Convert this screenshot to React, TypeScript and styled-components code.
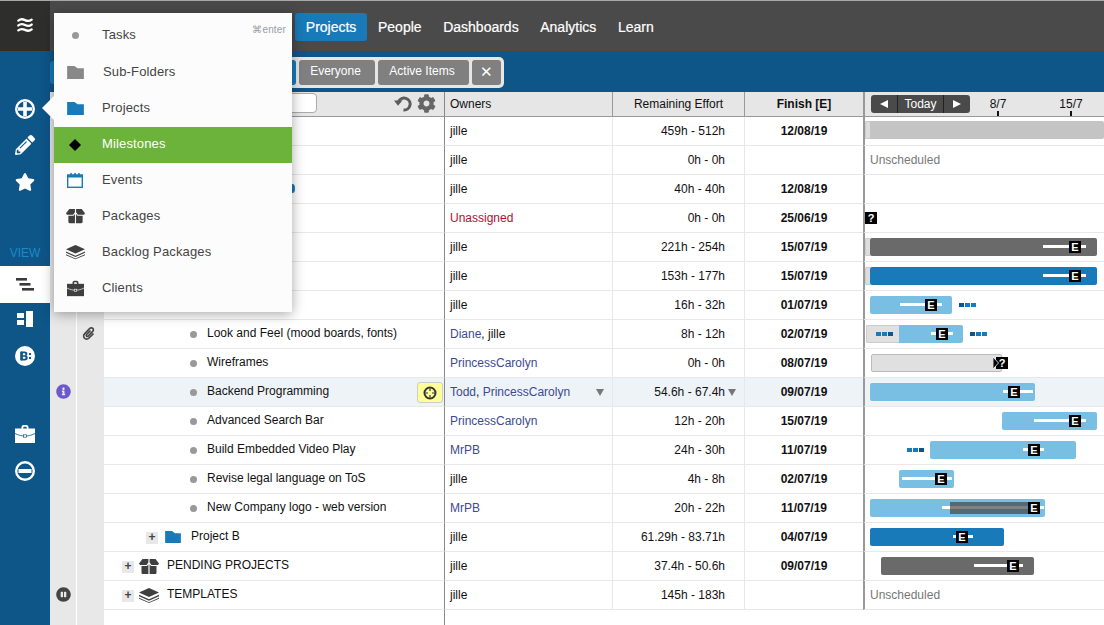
import React from 'react';
import styled, { createGlobalStyle, css } from 'styled-components';
import { FaPencilAlt, FaStar, FaInfoCircle, FaPauseCircle, FaCog, FaPaperclip } from 'react-icons/fa';

const Global = createGlobalStyle`
  html, body { margin: 0; padding: 0; height: 100%; overflow: hidden; background: #fff; }
  body { font-family: "Liberation Sans", Arial, sans-serif; font-size: 12px; color: #111; }
  #root { height: 100%; }
  * { box-sizing: border-box; }
`;

const BLUE = '#0e5588';
const MID = '#187ab8';
const LIGHT = '#79bfe3';

const Page = styled.div`
  position: relative; width: 1104px; height: 625px; overflow: hidden;
  display: flex; flex-direction: column;
`;
const TopBar = styled.header`
  height: 51px; flex: none; display: flex; background: #4a4a4a; border-top: 1px solid #a8a8a8;
`;
const Logo = styled.div`
  width: 50px; background: #2e2e2c; display: flex; align-items: center; justify-content: center; color: #fff; padding-bottom: 2px;
`;
const Nav = styled.nav`
  display: flex; align-items: flex-start; padding: 12px 0 0 245px;
`;
const NavItem = styled.a<{ $on?: boolean }>`
  height: 28px; line-height: 29px; padding: 0 10.8px; font-size: 14px; color: #fff; border-radius: 3px;
  -webkit-text-stroke: 0.2px #fff;
  ${p => p.$on && css`background: ${MID};`}
`;
const Body = styled.div`
  flex: 1; display: flex; min-height: 0;
`;
const Sidebar = styled.aside`
  width: 50px; flex: none; background: ${BLUE}; display: flex; flex-direction: column; padding-top: 39px; color: #fff;
`;
const SideIcon = styled.div<{ $mt?: number; $on?: boolean; $up?: number }>`
  height: 37px; flex: none; display: flex; align-items: center; justify-content: center;
  margin-top: ${p => p.$mt ?? 0}px; padding-bottom: ${p => p.$up ?? 0}px;
  ${p => p.$on && css`background: #fff; color: #3a3a3a;`}
`;
const ViewLabel = styled.div`
  margin-top: 45px; margin-bottom: 6px; height: 14px; line-height: 14px; text-align: center; color: #1a8ac8; font-size: 12px;
`;
const Main = styled.main`
  flex: 1; min-width: 0; display: flex; flex-direction: column;
`;
const SubBar = styled.div`
  height: 41px; flex: none; background: ${BLUE}; display: flex; align-items: center; padding: 1px 0 0 4px;
`;
const FilterGroup = styled.div`
  position: relative; display: flex; gap: 3px; padding: 3px; height: 31px; border-radius: 5px; background: #e6e6e6;
  &::before { content: ''; position: absolute; left: -4px; top: 4px; bottom: 4px; width: 8px; background: ${MID}; border-radius: 3px 0 0 3px; }
`;
const Filter = styled.div<{ $blue?: boolean; $w: number }>`
  width: ${p => p.$w}px; height: 25px; line-height: 23px; padding-right: 3px; text-align: center; color: #fff; border-radius: 3px; font-size: 12px;
  background: ${p => (p.$blue ? MID : '#808080')};
`;
const CloseFilter = styled(Filter)`
  font-size: 15px; padding-right: 0; line-height: 24px;
`;
const gridCols = css`
  display: grid; grid-template-columns: 26px 1px 27px 341px 168px 132px 118px 241px;
`;
const HeadRow = styled.div`
  ${gridCols}; height: 25px; flex: none; background: #e6e6e6; border-bottom: 1px solid #999;
`;
const HeadCell = styled.div<{ $bold?: boolean; $pad?: number }>`
  display: flex; align-items: center; justify-content: ${p => (p.$pad ? 'flex-start' : 'center')};
  padding-left: ${p => p.$pad ?? 0}px; padding-bottom: 1px; border-right: 1px solid #999; color: #111;
  font-weight: ${p => (p.$bold ? 700 : 400)};
`;
const FinishHead = styled(HeadCell)`border-right: none;`;
const HeadName = styled.div`
  display: flex; align-items: center; padding: 0 8px 2px 26px; border-right: 1px solid #888; color: #666;
`;
const SearchBox = styled.div`
  width: 187px; height: 20px; background: #fff; border: 1px solid #aaa; border-radius: 4px;
`;
const HeadTools = styled.div`
  margin-left: auto; display: flex; align-items: center; gap: 5px; color: #666;
`;
const GutterA = styled.div`background: #e8e8e8;`;
const GutterLine = styled.div`background: #fff;`;
const GutterB = styled.div`background: #e8e8e8; display: flex; align-items: center; justify-content: center; color: #444; padding: 0 4px 2px 0;`;
const GutterIcon = styled(GutterA)<{ $c?: string }>`
  display: flex; align-items: center; justify-content: center; color: ${p => p.$c ?? '#444'}; padding-bottom: 3px;
`;
const TimelineHead = styled.div`
  position: relative; border-left: 2px solid #999; margin-bottom: -1px; border-bottom: 1px solid #999;
`;
const TodayGroup = styled.div`
  position: absolute; left: 6px; top: 3px; height: 18px; width: 99px; display: flex; background: #4a4a4a; border-radius: 3px; color: #fff;
`;
const TodayPart = styled.div<{ $w: number; $b?: boolean }>`
  width: ${p => p.$w}px; display: flex; align-items: center; justify-content: center; font-size: 12px; font-weight: 400;
  ${p => p.$b && css`border-left: 1px solid #222; border-right: 1px solid #222;`}
`;
const Tri = styled.span<{ $left?: boolean }>`
  width: 0; height: 0; border-top: 4.5px solid transparent; border-bottom: 4.5px solid transparent;
  ${p => (p.$left ? css`border-right: 8px solid #fff;` : css`border-left: 8px solid #fff;`)}
`;
const DateLabel = styled.div<{ $x: number }>`
  position: absolute; left: ${p => p.$x - 20}px; top: 5px; width: 40px; text-align: center; color: #111;
  &::after { content: ''; position: absolute; left: 19px; top: 14px; width: 2px; height: 5px; background: #111; }
`;
const Rows = styled.div`
  flex: 1; display: flex; flex-direction: column; min-height: 0;
`;
const Row = styled.div<{ $hl?: boolean }>`
  ${gridCols}; height: 29px; flex: none;
  --row: ${p => (p.$hl ? '#eef3f8' : '#fff')};
`;
const Filler = styled.div`
  ${gridCols}; flex: 1;
`;
const cellBase = css`
  background: var(--row, #fff); border-bottom: 1px solid #e8e8e8;
`;
const NameCell = styled.div<{ $ind: number }>`
  ${cellBase}; position: relative; display: flex; align-items: center; padding: 0 0 3px ${p => p.$ind}px; border-right: 1px solid #888; white-space: nowrap; color: #111;
`;
const FillName = styled.div`border-right: 1px solid #888;`;
const Bullet = styled.span`
  width: 7px; height: 7px; border-radius: 50%; background: #999; margin-right: 10px; margin-top: 3px; flex: none;
`;
const Expander = styled.span`
  width: 12px; height: 12px; background: #e8e8e8; color: #444; font-size: 12px; font-weight: 700; line-height: 11px; text-align: center; flex: none; margin-top: 4px;
`;
const NodeIcon = styled.span<{ $ml: number; $mr: number }>`
  display: inline-flex; flex: none; margin: 3px ${p => p.$mr}px 0 ${p => p.$ml}px;
`;
const PeekDot = styled.span`
  position: absolute; left: 186px; top: 9px; width: 5px; height: 9px; border-radius: 50%; background: ${MID};
`;
const YellowBtn = styled.div`
  position: absolute; right: 1px; top: 4px; width: 26px; height: 21px; background: #ffff99; border: 1px solid #ccc; border-radius: 3px; display: flex; align-items: center; justify-content: center;
`;
const OwnerCell = styled.div`
  ${cellBase}; position: relative; display: flex; align-items: center; padding: 0 0 1px 5px; border-right: 1px solid #e8e8e8; color: #111; white-space: nowrap;
`;
const Who = styled.span<{ $c?: string }>`color: ${p => p.$c ?? '#111'};`;
const DropTri = styled.span<{ $x: number }>`
  position: absolute; left: ${p => p.$x}px; top: 11px; width: 0; height: 0;
  border-left: 4.5px solid transparent; border-right: 4.5px solid transparent; border-top: 7px solid #777;
`;
const EffortCell = styled.div`
  ${cellBase}; position: relative; display: flex; align-items: center; justify-content: flex-end; padding: 0 19px 1px 0; border-right: 1px solid #e8e8e8; color: #111;
`;
const FinishCell = styled.div`
  ${cellBase}; display: flex; align-items: center; justify-content: center; padding-bottom: 1px; font-weight: 700; color: #111;
`;
const GanttCell = styled.div`
  ${cellBase}; position: relative; border-left: 2px solid #999; overflow: hidden;
`;
const FillGantt = styled.div``;
const Unscheduled = styled.div`
  position: absolute; left: 5px; top: 7px; color: #777;
`;
const Bar = styled.div<{ $x: number; $w: number; $c: string; $y?: number }>`
  position: absolute; left: ${p => p.$x}px; width: ${p => p.$w}px; top: ${p => p.$y ?? 5}px; height: 18px; background: ${p => p.$c}; border-radius: 2px;
`;
const GhostBar = styled.div<{ $x: number; $w: number }>`
  position: absolute; left: ${p => p.$x}px; width: ${p => p.$w}px; top: 5px; height: 18px; background: #e0e0e0; border: 1px solid #bbb; border-radius: 2px;
`;
const Handle = styled.div<{ $y?: number }>`
  position: absolute; left: 0; width: 5px; top: ${p => p.$y ?? 5}px; height: 18px; background: #ddd; border: 1px solid #ccc; border-right: none; border-radius: 2px 0 0 2px;
`;
const GrayStub = styled.div<{ $x: number; $w: number }>`
  position: absolute; left: ${p => p.$x}px; width: ${p => p.$w}px; top: 5px; height: 18px; background: #e0e0e0; border: 1px solid #ccc; border-right: none; border-radius: 2px 0 0 2px;
`;
const Line = styled.div<{ $x: number; $w: number }>`
  position: absolute; left: ${p => p.$x}px; width: ${p => p.$w}px; top: 12px; height: 3px; background: #fff;
`;
const Shade = styled.div<{ $x: number; $w: number }>`
  position: absolute; left: ${p => p.$x}px; width: ${p => p.$w}px; top: 8px; height: 12px; background: rgba(60, 60, 60, 0.65);
`;
const Marker = styled.div<{ $x: number }>`
  position: absolute; left: ${p => p.$x}px; top: 8px; width: 12px; height: 12px; background: #000; color: #fff;
  font-size: 11px; font-weight: 700; line-height: 12px; text-align: center;
`;
const Dots = styled.div<{ $x: number }>`
  position: absolute; left: ${p => p.$x}px; top: 12px; display: flex; gap: 1px;
`;
const Dot = styled.span<{ $dark?: boolean }>`
  width: 5px; height: 4px; background: ${p => (p.$dark ? BLUE : MID)};
`;
const Chevron = styled.svg<{ $x: number }>`
  position: absolute; left: ${p => p.$x}px; top: 8px;
`;
const Menu = styled.div`
  position: absolute; left: 54px; top: 13px; width: 238px; height: 299px; padding-top: 5px; background: #fcfcfc;
  box-shadow: 0 2px 12px rgba(0, 0, 0, 0.35);
  &::before { content: ''; position: absolute; left: -12px; top: 83px; width: 0; height: 0;
    border-top: 12px solid transparent; border-bottom: 12px solid transparent; border-right: 12px solid #fcfcfc; }
`;
const MenuItem = styled.div<{ $on?: boolean; $mb?: number }>`
  position: relative; height: 36px; display: flex; align-items: center; padding-bottom: 4px; font-size: 13px; letter-spacing: 0.15px;
  margin-bottom: ${p => p.$mb ?? 0}px;
  color: ${p => (p.$on ? '#fff' : '#444')};
  background: ${p => (p.$on ? '#6bb33a' : 'transparent')};
`;
const MenuGlyph = styled.span`
  width: 42px; flex: none; display: flex; justify-content: center; padding-top: 3px; margin-right: 6px;
`;
const MenuText = styled.span<{ $nudge?: number }>`
  margin-left: ${p => p.$nudge ?? 0}px;
`;
const Shortcut = styled.span`
  position: absolute; right: 6px; top: 6px; font-size: 10px; color: #9a9aa8;
`;

const Waves = () => (
  <svg width="16" height="16" viewBox="0 0 18 17" fill="none" stroke="#fff" strokeWidth="2.6" strokeLinecap="round">
    <path d="M1.5 3.5C4 1.500 6 1.500 9 3s5 1.500 7.500-.5" />
    <path d="M1.5 9C4 7 6 7 9 8.500s5 1.500 7.500-.5" />
    <path d="M1.5 14.500C4 12.500 6 12.500 9 14s5 1.500 7.500-.5" />
  </svg>
);
const UndoGlyph = () => (
  <svg width="18" height="17" viewBox="0 0 18 17" fill="none">
    <path d="M4.600 6.600A6 6 0 1 1 9.500 15" stroke="#5c5c5c" strokeWidth="3" />
    <path d="M0 5.400h8.400L4 10.800z" fill="#5c5c5c" />
  </svg>
);
const PlusCircle = () => (
  <svg width="20" height="20" viewBox="0 0 20 20">
    <circle cx="10" cy="10" r="10" fill="#fff" />
    <circle cx="10" cy="10" r="7.6" fill={BLUE} />
    <path d="M8.2 3h3.6v5.2H17v3.600h-5.2V17H8.2v-5.2H3V8.2h5.2z" fill="#fff" />
  </svg>
);
const MinusCircle = () => (
  <svg width="20" height="20" viewBox="0 0 20 20">
    <circle cx="10" cy="10" r="10" fill="#fff" />
    <circle cx="10" cy="10" r="7.6" fill={BLUE} />
    <rect x="3.5" y="8" width="13" height="4" fill="#fff" />
  </svg>
);
const BCircle = () => (
  <svg width="20" height="20" viewBox="0 0 20 20">
    <circle cx="10" cy="10" r="10" fill="#fff" />
    <rect x="5.2" y="5.6" width="2.2" height="8.8" fill={BLUE} />
    <path d="M6 5.6h3.6c2 0 2.8 1 2.8 2.2 0 1-.5 1.7-1.3 2 1 .3 1.6 1 1.6 2.1 0 1.5-1 2.5-3 2.5H6zM7.8 7.2v2.1h1.4c.8 0 1.2-.4 1.2-1s-.4-1.1-1.2-1.1zM7.8 10.8v2h1.6c.8 0 1.2-.4 1.2-1s-.4-1-1.2-1z" fill={BLUE} fillRule="evenodd" />
    <rect x="14" y="7" width="2" height="2" fill={BLUE} />
    <rect x="14" y="11" width="2" height="2" fill={BLUE} />
  </svg>
);
const GanttGlyph = () => (
  <svg width="18" height="13" viewBox="0 0 18 13" fill="#3a3a3a">
    <rect x="0" y="0" width="11" height="2.6" />
    <rect x="3.5" y="5" width="11" height="2.6" />
    <rect x="6" y="10" width="12" height="2.6" />
  </svg>
);
const BoardGlyph = () => (
  <svg width="16" height="16" viewBox="0 0 16 16" fill="#fff">
    <rect x="0" y="2" width="7" height="5" />
    <rect x="0" y="9" width="7" height="5" />
    <rect x="9" y="0" width="7" height="16" />
  </svg>
);
const Briefcase = ({ w, body, line }: { w: number; body: string; line: string }) => (
  <svg width={w} height={w} viewBox="0 0 20 20">
    <path d="M6.5 5V3.2C6.5 2 7.4 1 8.6 1h2.8c1.200 0 2.100 1 2.100 2.200V5h-1.800V3.400c0-.4-.3-.7-.7-.7H9c-.4 0-.7.3-.7.7V5z" fill={body} />
    <path d="M0 4.500h20V19H0z" fill={body} />
    <path d="M0 9.500C4 11.500 7 12 10 12s6-.5 10-2.500" fill="none" stroke={line} strokeWidth="0.8" />
    <rect x="8.500" y="10.800" width="3" height="2.400" fill={body} stroke={line} strokeWidth="0.7" />
  </svg>
);
const Folder = ({ c, w = 16 }: { c: string; w?: number }) => (
  <svg width={w} height={w * 0.8} viewBox="0 0 16 13" fill={c}>
    <path d="M0 0h7l3 2.200h6V13H0z" />
  </svg>
);
const Box = ({ w = 20 }: { w?: number }) => (
  <svg width={w} height={w * 0.75} viewBox="0 0 20 15" fill="#3f3f3f">
    <path d="M3.500 0H9.400v3.500L7.500 6H1L0 4.500zM10.600 0h5.900L20 4.500 19 6h-6.500l-1.900-2.500z" />
    <path d="M2.500 7h5.500l1.400-1.800V15H4c-1 0-1.500-.5-1.500-1.500zM10.600 5.200L12 7h5.500v6.500c0 1-.5 1.500-1.500 1.500h-5.400z" />
  </svg>
);
const Stack = ({ w = 20 }: { w?: number }) => (
  <svg width={w} height={w * 0.75} viewBox="0 0 20 15" fill="#3f3f3f">
    <path d="M10 0l10 4.500-10 4.500L0 4.500z" />
    <path d="M0 6.800l10 4.500 10-4.500v1.400L10 12.700 0 8.200z" />
    <path d="M0 9.800l10 4.500 10-4.500v1L10 15 0 10.800z" />
  </svg>
);
const Calendar = () => (
  <svg width="16" height="15" viewBox="0 0 16 15" fill="none">
    <rect x="0.700" y="2.200" width="14.600" height="12.100" fill="#fff" stroke={MID} strokeWidth="1.400" />
    <rect x="0" y="1.500" width="16" height="3" fill={MID} />
    <rect x="3.300" y="0" width="1.500" height="3.500" fill={MID} />
    <rect x="11.200" y="0" width="1.500" height="3.500" fill={MID} />
    <rect x="7.300" y="0" width="1.500" height="3.500" fill={MID} />
  </svg>
);
const Diamond = () => (
  <svg width="12" height="12" viewBox="0 0 12 12"><path d="M6 0l6 6-6 6-6-6z" fill="#000" /></svg>
);
const TaskDot = () => (
  <svg width="7" height="7" viewBox="0 0 7 7"><circle cx="3.500" cy="3.500" r="3.500" fill="#999" /></svg>
);
const Crosshair = () => (
  <svg width="14" height="14" viewBox="0 0 14 14" fill="none" stroke="#333">
    <circle cx="7" cy="7" r="5.500" strokeWidth="2" />
    <path d="M7 2.500v2.500M7 9v2.500M2.500 7H5M9 7h2.500" strokeWidth="1.200" />
  </svg>
);

type G = React.ReactNode;
const at = (x: number) => x - 865;
const E = ({ x }: { x: number }) => <Marker $x={at(x)}>E</Marker>;
const Three = ({ x, first }: { x: number; first?: boolean }) => (
  <Dots $x={at(x)}>
    <Dot $dark={first} /><Dot /><Dot $dark={!first} />
  </Dots>
);
const B = (x: number, x2: number, c: string, y?: number) => <Bar $x={at(x)} $w={x2 - x} $c={c} $y={y} />;
const L = (x: number, x2: number) => <Line $x={at(x)} $w={x2 - x} />;

const PC = <Who $c="#3d4a8f">PrincessCarolyn</Who>;
const J = <Who>jille</Who>;

interface R { ind?: number; name?: G; owner: G; eff: string; fin?: string; gantt?: G; gutter?: G; clip?: boolean; hl?: boolean; peek?: boolean; }
const task = (t: string) => (<><Bullet /><span>{t}</span></>);

const rows: R[] = [
  { owner: J, eff: '459h - 512h', fin: '12/08/19', gantt: <>{B(865, 1104, '#c4c4c4', 4)}<Handle $y={4} /></> },
  { owner: J, eff: '0h - 0h', gantt: <Unscheduled>Unscheduled</Unscheduled> },
  { owner: J, eff: '40h - 40h', fin: '12/08/19', peek: true },
  { owner: <Who $c="#b0102f">Unassigned</Who>, eff: '0h - 0h', fin: '25/06/19', gantt: <Marker $x={0}>?</Marker> },
  { owner: J, eff: '221h - 254h', fin: '15/07/19', gantt: <><Handle />{B(870, 1097, '#6a6a6a')}{L(1043, 1086)}<E x={1069} /></> },
  { owner: J, eff: '153h - 177h', fin: '15/07/19', gantt: <><Handle />{B(870, 1097, MID)}{L(1043, 1086)}<E x={1069} /></> },
  { owner: J, eff: '16h - 32h', fin: '01/07/19', gantt: <>{B(870, 952, LIGHT)}{L(900, 942)}<E x={925} /><Three x={959} first /></> },
  { ind: 86, name: task('Look and Feel (mood boards, fonts)'), clip: true, owner: <><Who $c="#3d4a8f">Diane</Who>, jille</>, eff: '8h - 12h', fin: '02/07/19',
    gantt: <>{B(890, 963, LIGHT)}<GrayStub $x={at(866)} $w={33} /><Three x={876} />{L(931, 953)}<E x={936} /><Three x={970} first /></> },
  { ind: 86, name: task('Wireframes'), owner: PC, eff: '0h - 0h', fin: '08/07/19',
    gantt: <><GhostBar $x={at(871)} $w={131} /><Marker $x={at(996)}>?</Marker><Chevron $x={at(993)} width="7" height="12" viewBox="0 0 7 12"><path d="M0 0l5.500 6L0 12z" fill="#000" stroke="#fff" strokeWidth="0.800" /></Chevron></> },
  { ind: 86, name: <>{task('Backend Programming')}<YellowBtn><Crosshair /></YellowBtn></>, hl: true, gutter: <FaInfoCircle size={15} />,
    owner: <><Who $c="#3d4a8f">Todd</Who>,&nbsp;{PC}<DropTri $x={151} /></>, eff: '54.6h - 67.4h', fin: '09/07/19',
    gantt: <>{B(870, 1035, LIGHT)}{L(1003, 1033)}<E x={1008} /></> },
  { ind: 86, name: task('Advanced Search Bar'), owner: PC, eff: '12h - 20h', fin: '15/07/19', gantt: <>{B(1002, 1097, LIGHT)}{L(1034, 1086)}<E x={1069} /></> },
  { ind: 86, name: task('Build Embedded Video Play'), owner: <Who $c="#3d4a8f">MrPB</Who>, eff: '24h - 30h', fin: '11/07/19', gantt: <><Three x={907} />{B(930, 1076, LIGHT)}{L(1023, 1044)}<E x={1028} /></> },
  { ind: 86, name: task('Revise legal language on ToS'), owner: J, eff: '4h - 8h', fin: '02/07/19', gantt: <>{B(899, 954, LIGHT)}{L(902, 952)}<E x={935} /></> },
  { ind: 86, name: task('New Company logo - web version'), owner: <Who $c="#3d4a8f">MrPB</Who>, eff: '20h - 22h', fin: '11/07/19', gantt: <>{B(870, 1045, LIGHT)}{L(942, 1044)}<Shade $x={at(950)} $w={86} /><E x={1028} /></> },
  { ind: 42, name: <><Expander>+</Expander><NodeIcon $ml={7} $mr={10}><Folder c={MID} /></NodeIcon><span>Project B</span></>, owner: J, eff: '61.29h - 83.71h', fin: '04/07/19', gantt: <>{B(870, 1004, MID)}{L(953, 973)}<E x={956} /></> },
  { ind: 18, name: <><Expander>+</Expander><NodeIcon $ml={5} $mr={8}><Box /></NodeIcon><span>PENDING PROJECTS</span></>, owner: J, eff: '37.4h - 50.6h', fin: '09/07/19', gantt: <>{B(881, 1034, '#6a6a6a')}{L(974, 1023)}<E x={1007} /></> },
  { ind: 18, name: <><Expander>+</Expander><NodeIcon $ml={5} $mr={8}><Stack /></NodeIcon><span>TEMPLATES</span></>, gutter: <FaPauseCircle size={15} />, owner: J, eff: '145h - 183h', gantt: <Unscheduled>Unscheduled</Unscheduled> },
];

export default function App() {
  return (
    <Page>
      <Global />
      <TopBar>
        <Logo><Waves /></Logo>
        <Nav>
          <NavItem $on>Projects</NavItem>
          <NavItem>People</NavItem>
          <NavItem>Dashboards</NavItem>
          <NavItem>Analytics</NavItem>
          <NavItem>Learn</NavItem>
        </Nav>
      </TopBar>
      <Body>
        <Sidebar>
          <SideIcon><PlusCircle /></SideIcon>
          <SideIcon $up={1}><FaPencilAlt size={20} /></SideIcon>
          <SideIcon $up={1}><FaStar size={20} /></SideIcon>
          <ViewLabel>VIEW</ViewLabel>
          <SideIcon $on><GanttGlyph /></SideIcon>
          <SideIcon $mt={-3}><BoardGlyph /></SideIcon>
          <SideIcon><BCircle /></SideIcon>
          <SideIcon $mt={41}><Briefcase w={20} body="#fff" line={BLUE} /></SideIcon>
          <SideIcon><MinusCircle /></SideIcon>
        </Sidebar>
        <Main>
          <SubBar>
            <FilterGroup>
              <Filter $blue $w={239} />
              <Filter $w={76}>Everyone</Filter>
              <Filter $w={91}>Active Items</Filter>
              <CloseFilter $w={29}>✕</CloseFilter>
            </FilterGroup>
          </SubBar>
          <HeadRow>
            <GutterA />
            <GutterLine />
            <GutterB />
            <HeadName>
              <SearchBox />
              <HeadTools>
                <UndoGlyph />
                <FaCog size={19} />
              </HeadTools>
            </HeadName>
            <HeadCell $pad={5}>Owners</HeadCell>
            <HeadCell>Remaining Effort</HeadCell>
            <FinishHead $bold>Finish [E]</FinishHead>
            <TimelineHead>
              <TodayGroup>
                <TodayPart $w={26}><Tri $left /></TodayPart>
                <TodayPart $w={47} $b>Today</TodayPart>
                <TodayPart $w={26}><Tri /></TodayPart>
              </TodayGroup>
              <DateLabel $x={133}>8/7</DateLabel>
              <DateLabel $x={206}>15/7</DateLabel>
            </TimelineHead>
          </HeadRow>
          <Rows>
            {rows.map((r, i) => (
              <Row key={i} $hl={r.hl}>
                <GutterIcon $c={r.hl ? '#6a5acd' : '#444'}>{r.gutter}</GutterIcon>
                <GutterLine />
                <GutterB>{r.clip && <FaPaperclip size={13} />}</GutterB>
                <NameCell $ind={r.ind ?? 0}>
                  {r.name}
                  {r.peek && <PeekDot />}
                </NameCell>
                <OwnerCell>{r.owner}</OwnerCell>
                <EffortCell>
                  {r.eff}
                  {r.hl && <DropTri $x={115} />}
                </EffortCell>
                <FinishCell>{r.fin}</FinishCell>
                <GanttCell>{r.gantt}</GanttCell>
              </Row>
            ))}
            <Filler>
              <GutterA />
              <GutterLine />
              <GutterB />
              <FillName />
              <div />
              <div />
              <div />
              <FillGantt />
            </Filler>
          </Rows>
        </Main>
      </Body>
      <Menu>
        <MenuItem $mb={1}>
          <MenuGlyph><TaskDot /></MenuGlyph>
          <MenuText>Tasks</MenuText>
          <Shortcut>⌘enter</Shortcut>
        </MenuItem>
        <MenuItem><MenuGlyph><Folder c="#888" w={17} /></MenuGlyph><MenuText $nudge={1}>Sub-Folders</MenuText></MenuItem>
        <MenuItem><MenuGlyph><Folder c={MID} w={17} /></MenuGlyph><MenuText>Projects</MenuText></MenuItem>
        <MenuItem $on><MenuGlyph><Diamond /></MenuGlyph><MenuText>Milestones</MenuText></MenuItem>
        <MenuItem><MenuGlyph><Calendar /></MenuGlyph><MenuText>Events</MenuText></MenuItem>
        <MenuItem><MenuGlyph><Box w={19} /></MenuGlyph><MenuText>Packages</MenuText></MenuItem>
        <MenuItem><MenuGlyph><Stack w={19} /></MenuGlyph><MenuText>Backlog Packages</MenuText></MenuItem>
        <MenuItem><MenuGlyph><Briefcase w={17} body="#3f3f3f" line="#fcfcfc" /></MenuGlyph><MenuText>Clients</MenuText></MenuItem>
      </Menu>
    </Page>
  );
}
